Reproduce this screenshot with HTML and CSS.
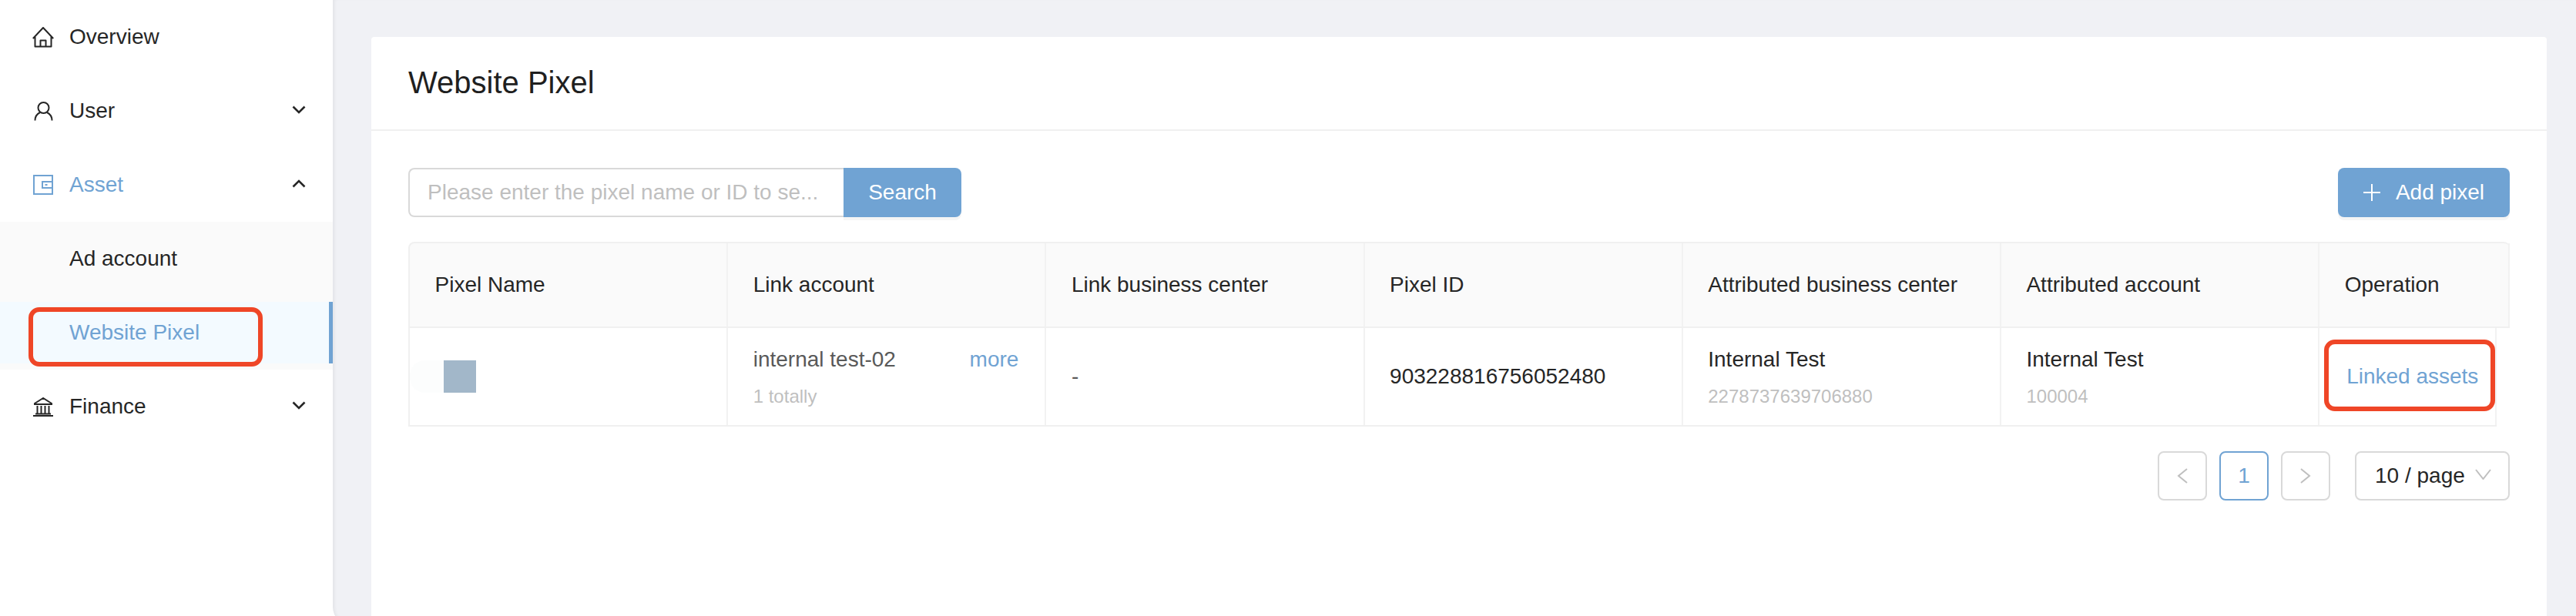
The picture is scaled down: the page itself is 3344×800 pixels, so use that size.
FILE: index.html
```html
<!DOCTYPE html>
<html lang="en">
<head>
<meta charset="utf-8">
<title>Website Pixel</title>
<link rel="stylesheet" href="styles.css">
</head>
<body>
<div class="app">
  <aside class="sidebar">
    <div class="menu-item">
      <svg class="icon icon-home" viewBox="0 0 28 27"><path d="M.8 15 14 1l13.200 14M3.500 13v12.500h21V13M10.500 25.500v-8h7v8"/></svg>
      <span class="menu-label">Overview</span>
    </div>
    <div class="menu-item">
      <svg class="icon icon-user" viewBox="0 0 25 26"><circle cx="12.500" cy="9" r="7"/><path d="M1.500 25.500c0-6 3.500-9 6.500-10.500M23.500 25.500c0-6-3.500-9-6.500-10.500"/></svg>
      <span class="menu-label">User</span>
      <svg class="chevron" viewBox="0 0 18 11"><path d="M1.500 1.500 9 9l7.500-7.500"/></svg>
    </div>
    <div class="menu-item menu-item-active">
      <svg class="icon icon-wallet" viewBox="0 0 26 26"><rect x="1" y="1" width="24" height="24"/><path d="M25 9H12v8h13M15.500 13h3"/></svg>
      <span class="menu-label">Asset</span>
      <svg class="chevron" viewBox="0 0 18 11"><path d="M1.500 9.500 9 2l7.500 7.500"/></svg>
    </div>
    <div class="submenu">
      <div class="sub-item sub-item-plain">Ad account</div>
      <div class="sub-item sub-item-selected">Website Pixel<span class="callout callout-menu"></span></div>
    </div>
    <div class="menu-item">
      <svg class="icon icon-bank" viewBox="0 0 26 25"><path d="M13 1 2 8v1h22V8zM5.500 11v10M10.500 11v10M15.500 11v10M20.500 11v10M3 21.500h20M0 24h26"/></svg>
      <span class="menu-label">Finance</span>
      <svg class="chevron" viewBox="0 0 18 11"><path d="M1.500 1.500 9 9l7.500-7.500"/></svg>
    </div>
  </aside>
  <main class="main">
    <section class="card">
      <header class="card-header"><h1 class="card-title">Website Pixel</h1></header>
      <div class="card-body">
        <div class="toolbar">
          <div class="search">
            <input class="search-input" type="text" placeholder="Please enter the pixel name or ID to se...">
            <button class="btn btn-search" type="button">Search</button>
          </div>
          <button class="btn btn-add" type="button">
            <svg class="plus" viewBox="0 0 22 22"><path d="M11 0v22M0 11h22"/></svg>
            <span>Add pixel</span>
          </button>
        </div>
        <div class="table-head">
          <div class="th">Pixel Name</div>
          <div class="th">Link account</div>
          <div class="th">Link business center</div>
          <div class="th">Pixel ID</div>
          <div class="th">Attributed business center</div>
          <div class="th">Attributed account</div>
          <div class="th">Operation</div>
        </div>
        <div class="table-row">
          <div class="td td-pixel"><span class="pixel-fade"></span><span class="pixel-mask"></span></div>
          <div class="td td-link">
            <div class="stack">
              <div class="line muted-strong">internal test-02</div>
              <div class="sub">1 totally</div>
            </div>
            <a class="link more">more</a>
          </div>
          <div class="td muted-strong">-</div>
          <div class="td">903228816756052480</div>
          <div class="td">
            <div class="stack">
              <div class="line">Internal Test</div>
              <div class="sub">2278737639706880</div>
            </div>
          </div>
          <div class="td">
            <div class="stack">
              <div class="line">Internal Test</div>
              <div class="sub">100004</div>
            </div>
          </div>
          <div class="td td-op"><a class="link">Linked assets</a><span class="callout callout-op"></span></div>
        </div>
        <div class="pagination">
          <div class="page-btn">
            <svg class="page-arrow" viewBox="0 0 14 20"><path d="M13 1 2 10l11 9"/></svg>
          </div>
          <div class="page-btn page-current">1</div>
          <div class="page-btn">
            <svg class="page-arrow" viewBox="0 0 14 20"><path d="m1 1 11 9-11 9"/></svg>
          </div>
          <div class="page-size">
            <span>10 / page</span>
            <svg class="size-arrow" viewBox="0 0 21 14"><path d="m1 1 9.500 12L20 1"/></svg>
          </div>
        </div>
      </div>
    </section>
  </main>
</div>
</body>
</html>
```

FILE: styles.css
```css
* { box-sizing: border-box; }

html, body {
  margin: 0;
  background: #fff;
}

body {
  font-family: "Liberation Sans", Arial, sans-serif;
  font-size: 28px;
  color: #262626;
}

.app {
  display: flex;
  align-items: flex-start;
  height: 800px;
  overflow: hidden;
}

/* Sidebar */
.sidebar {
  flex: 0 0 432px;
  height: 800px;
  background: #fff;
}

.menu-item {
  position: relative;
  display: flex;
  align-items: center;
  height: 96px;
  padding: 0 35px 0 90px;
}

.menu-label { flex: 1; }

.menu-item-active { color: #70a3d3; }

.icon {
  position: absolute;
  fill: none;
  stroke: #262626;
  stroke-width: 2;
}

.icon-home { left: 42px; top: 35px; width: 28px; height: 27px; stroke-linejoin: round; }
.icon-user { left: 44px; top: 35px; width: 25px; height: 26px; }
.icon-wallet { left: 43px; top: 35px; width: 26px; height: 26px; stroke: #70a3d3; }
.icon-bank { left: 43px; top: 36px; width: 26px; height: 25px; }

.chevron {
  width: 18px;
  height: 11px;
  margin-top: -4px;
  fill: none;
  stroke: #262626;
  stroke-width: 2.6;
}

.submenu {
  padding-bottom: 8px;
  background: #fafafa;
}

.sub-item {
  position: relative;
  display: flex;
  align-items: center;
  padding-left: 90px;
}

.sub-item-plain {
  height: 96px;
}

.sub-item-selected {
  height: 80px;
  margin-top: 8px;
  color: #70a3d3;
  background: #f3faff;
  border-right: 5px solid #70a3d3;
}

.callout {
  position: absolute;
  border: 6px solid #ef4627;
  border-radius: 14px;
  pointer-events: none;
}

.callout-menu { left: 37px; top: 7px; width: 304px; height: 77px; }
.callout-op { left: 6px; top: 15px; width: 222px; height: 93px; }

/* Main area */
.main {
  flex: 1;
  display: flex;
  height: 812px;
  padding: 48px 38px 0 50px;
  background: #f0f1f5;
  border-bottom-left-radius: 24px;
  box-shadow: inset 4px 0 4px -2px rgba(0, 0, 0, .06);
}

.card {
  flex: 1;
  background: #fff;
  border-radius: 4px 4px 0 0;
}

.card-header {
  display: flex;
  align-items: center;
  height: 122px;
  padding: 0 48px 2px;
  border-bottom: 2px solid #f0f0f0;
}

.card-title {
  margin: 0;
  font-size: 40px;
  font-weight: 400;
  color: #1f1f1f;
}

.card-body { padding: 48px 48px 0; }

.toolbar {
  display: flex;
  justify-content: space-between;
  height: 64px;
  margin-bottom: 32px;
}

.search { display: flex; }

.search-input {
  width: 565px;
  height: 64px;
  padding: 0 23px;
  border: 2px solid #d9d9d9;
  border-right: 0;
  border-radius: 8px 0 0 8px;
  outline: 0;
  font: inherit;
  color: #262626;
  background: #fff;
}

.search-input::placeholder { color: #bfbfbf; opacity: 1; }

.btn {
  display: flex;
  align-items: center;
  justify-content: center;
  height: 64px;
  border: 0;
  padding: 0;
  font: inherit;
  color: #fff;
  background: #70a3d3;
  box-shadow: 0 4px 0 #f5f5f5;
}

.btn-search { width: 153px; border-radius: 0 8px 8px 0; }
.btn-add { width: 223px; gap: 20px; border-radius: 8px; }

.plus {
  width: 22px;
  height: 22px;
  fill: none;
  stroke: #fff;
  stroke-width: 2;
}

/* Table */
.table-head,
.table-row {
  display: grid;
  grid-template-columns: repeat(6, 413.2px) 1fr;
  border-left: 2px solid #f0f0f0;
  border-bottom: 2px solid #f0f0f0;
}

.table-head {
  height: 112px;
  background: #fafafa;
  border-top: 2px solid #f0f0f0;
  border-radius: 8px 8px 0 0;
}

.table-row {
  width: 2711px;
  height: 128px;
}

.th,
.td {
  display: flex;
  align-items: center;
  padding: 0 32.5px;
  border-right: 2px solid #f2f2f2;
}

.td-pixel { padding: 0; }

.pixel-fade {
  width: 44px;
  height: 42px;
  background: #fcfdfd;
  border-radius: 20px 0 0 20px;
}

.pixel-mask {
  width: 42px;
  height: 42px;
  background: #a2b7c9;
}

.td-link {
  justify-content: space-between;
  padding-right: 34px;
}

.stack { display: flex; flex-direction: column; gap: 8px; }
.line { height: 44px; line-height: 44px; }
.sub { height: 36px; line-height: 36px; font-size: 24px; color: #bfbfbf; }
.muted-strong { color: #595959; }
.link { color: #70a3d3; }
.more { margin-top: -44px; }

.td-op {
  position: relative;
  padding: 0 0 0 35px;
}

/* Pagination */
.pagination {
  display: flex;
  justify-content: flex-end;
  gap: 16px;
  margin-top: 32px;
}

.page-btn {
  display: flex;
  align-items: center;
  justify-content: center;
  width: 64px;
  height: 64px;
  border: 2px solid #d9d9d9;
  border-radius: 8px;
}

.page-current {
  color: #70a3d3;
  border-color: #70a3d3;
}

.page-arrow {
  width: 14px;
  height: 20px;
  fill: none;
  stroke: #bfbfbf;
  stroke-width: 2;
}

.page-size {
  display: flex;
  align-items: center;
  justify-content: space-between;
  width: 201px;
  height: 64px;
  margin-left: 16px;
  padding: 0 22px 0 24px;
  border: 2px solid #d9d9d9;
  border-radius: 8px;
}

.size-arrow {
  width: 21px;
  height: 14px;
  margin-top: -4px;
  fill: none;
  stroke: #bfbfbf;
  stroke-width: 2;
}
```
